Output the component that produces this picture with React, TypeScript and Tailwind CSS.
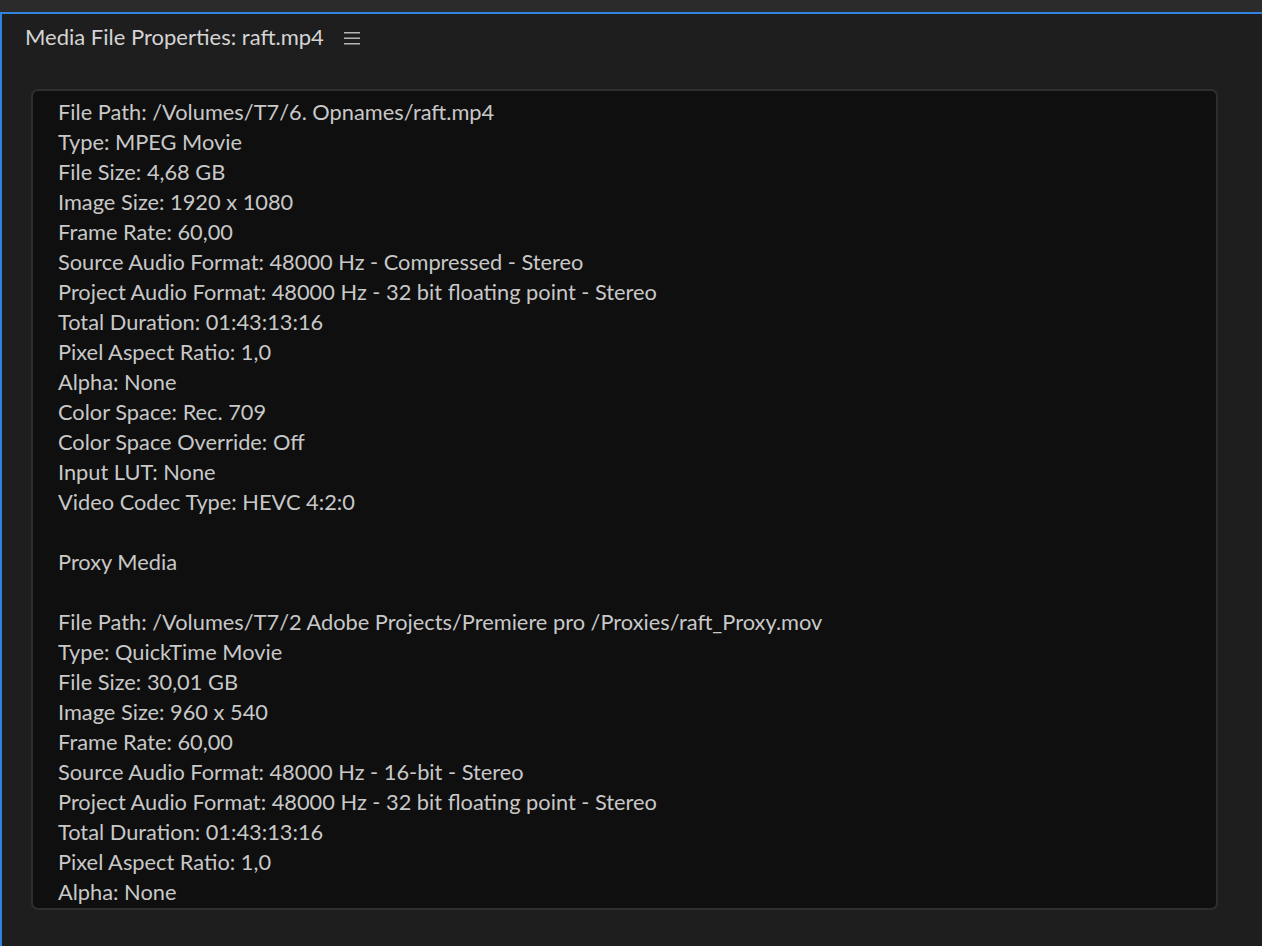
const mediaLines = [
    "File Path: /Volumes/T7/6. Opnames/raft.mp4",
    "Type: MPEG Movie",
    "File Size: 4,68 GB",
    "Image Size: 1920 x 1080",
    "Frame Rate: 60,00",
    "Source Audio Format: 48000 Hz - Compressed - Stereo",
    "Project Audio Format: 48000 Hz - 32 bit floating point - Stereo",
    "Total Duration: 01:43:13:16",
    "Pixel Aspect Ratio: 1,0",
    "Alpha: None",
    "Color Space: Rec. 709",
    "Color Space Override: Off",
    "Input LUT: None",
    "Video Codec Type: HEVC 4:2:0",
    "",
    "Proxy Media",
    "",
    "File Path: /Volumes/T7/2 Adobe Projects/Premiere pro /Proxies/raft_Proxy.mov",
    "Type: QuickTime Movie",
    "File Size: 30,01 GB",
    "Image Size: 960 x 540",
    "Frame Rate: 60,00",
    "Source Audio Format: 48000 Hz - 16-bit - Stereo",
    "Project Audio Format: 48000 Hz - 32 bit floating point - Stereo",
    "Total Duration: 01:43:13:16",
    "Pixel Aspect Ratio: 1,0",
    "Alpha: None",
];

export default function App() {
    return (
        <div
            className="w-[1262px] h-[946px] flex flex-col bg-[#2b2b2b] overflow-hidden"
            style={{ fontFamily: "Lato, 'Open Sans', sans-serif" }}
        >
            <div className="h-[12px] shrink-0" />
            <div className="flex-1 flex flex-col bg-[#1e1e1e] border-t-2 border-l-2 border-[#3283e0] min-h-0">
                <div className="h-[46px] shrink-0 flex items-center pl-[23px] gap-[20px]">
                    <span className="text-[22px] text-[#d4d4d4] leading-none">
                        Media File Properties: raft.mp4
                    </span>
                    <svg width="16" height="14" viewBox="0 0 16 14" className="mt-[1px]">
                        <rect x="0" y="1" width="16" height="1.5" fill="#b4b4b4" />
                        <rect x="0" y="6.5" width="16" height="1.5" fill="#b4b4b4" />
                        <rect x="0" y="12" width="16" height="1.5" fill="#b4b4b4" />
                    </svg>
                </div>
                <div className="ml-[29px] mt-[29px] w-[1187px] h-[821px] rounded-[7px] border-2 border-[#2e2e2e] bg-[#0f0f0f] overflow-hidden">
                    <div className="pl-[25px] pt-[6px] flex flex-col">
                        {mediaLines.map((line, i) => (
                            <div key={i} className="h-[30px] leading-[30px] text-[21.8px] text-[#c8c8c8] whitespace-pre">
                                {line || " "}
                            </div>
                        ))}
                    </div>
                </div>
            </div>
        </div>
    );
}
